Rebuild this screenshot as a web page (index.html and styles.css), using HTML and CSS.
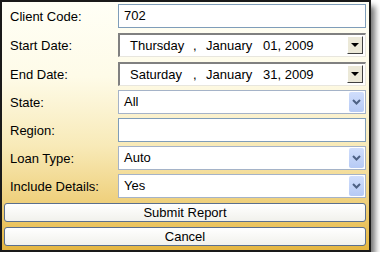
FILE: index.html
```html
<!DOCTYPE html>
<html lang="en">
<head>
  <meta charset="UTF-8">
  <title>Report Criteria</title>
  <link rel="stylesheet" href="styles.css">
</head>
<body>
  <div class="panel">
    <div class="row">
      <label class="label">Client Code:</label>
      <div class="field text">702</div>
    </div>
    <div class="row date-row">
      <label class="label">Start Date:</label>
      <div class="field date"><span class="d-day">Thursday</span><span class="d-sep">,</span><span class="d-month">January</span><span class="d-num">01, 2009</span><span class="date-btn"><span class="tri"></span></span></div>
    </div>
    <div class="row date-row">
      <label class="label">End Date:</label>
      <div class="field date"><span class="d-day">Saturday</span><span class="d-sep">,</span><span class="d-month">January</span><span class="d-num">31, 2009</span><span class="date-btn"><span class="tri"></span></span></div>
    </div>
    <div class="row">
      <label class="label">State:</label>
      <div class="field select">All<span class="sel-btn"><svg width="9" height="6" viewBox="0 0 9 6"><path d="M1 1 L4.5 4.5 L8 1" fill="none" stroke="#4d6185" stroke-width="2"/></svg></span></div>
    </div>
    <div class="row">
      <label class="label">Region:</label>
      <div class="field text"></div>
    </div>
    <div class="row">
      <label class="label">Loan Type:</label>
      <div class="field select">Auto<span class="sel-btn"><svg width="9" height="6" viewBox="0 0 9 6"><path d="M1 1 L4.5 4.5 L8 1" fill="none" stroke="#4d6185" stroke-width="2"/></svg></span></div>
    </div>
    <div class="row">
      <label class="label">Include Details:</label>
      <div class="field select">Yes<span class="sel-btn"><svg width="9" height="6" viewBox="0 0 9 6"><path d="M1 1 L4.5 4.5 L8 1" fill="none" stroke="#4d6185" stroke-width="2"/></svg></span></div>
    </div>
    <button class="button">Submit Report</button>
    <button class="button">Cancel</button>
  </div>
</body>
</html>
```

FILE: styles.css
```css
body {
  margin: 0;
  padding: 0;
  background-color: #fff;
  font-family: "Liberation Sans", Arial, sans-serif;
  font-size: 13px;
  color: #000;
}
.panel {
  box-sizing: border-box;
  width: 371px;
  height: 252px;
  border: 2px solid #1a1a1a;
  padding: 2px 3px 0 2px;
  background: linear-gradient(to bottom, #fffff6 0%, #fefbe8 30%, #f8eab8 58%, #efd17e 80%, #e5b640 100%);
  box-shadow: 4px 6px 6px rgba(0, 0, 0, 0.55);
  display: flex;
  flex-direction: column;
}
.row {
  display: flex;
  align-items: center;
  height: 24px;
  margin-bottom: 4px;
}
.date-row {
  margin-top: 1px;
}
.label {
  width: 108px;
  padding-left: 6px;
  flex-shrink: 0;
}
.field {
  box-sizing: border-box;
  position: relative;
  width: 248px;
  height: 24px;
  line-height: 22px;
  padding-left: 5px;
  background-color: #fff;
  white-space: nowrap;
}
.text {
  border: 1px solid #7f9db9;
}
.select {
  border: 1px solid #a5b3c8;
}
.sel-btn {
  position: absolute;
  right: 1px;
  top: 1px;
  width: 15px;
  height: 20px;
  border-radius: 2px;
  background: linear-gradient(to bottom, #d0defc, #b6caf5);
  display: flex;
  align-items: center;
  justify-content: center;
}
.date {
  border-top: 2px solid #808080;
  border-left: 2px solid #808080;
  border-bottom: 1px solid #e8e6de;
  border-right: 1px solid #e8e6de;
  line-height: 21px;
  padding-left: 10px;
}
.d-day {
  display: inline-block;
  width: 63px;
}
.d-sep {
  display: inline-block;
  width: 13px;
}
.d-month {
  display: inline-block;
  width: 57px;
}
.date-btn {
  position: absolute;
  right: 2px;
  top: 1px;
  box-sizing: border-box;
  width: 16px;
  height: 18px;
  background-color: #ece9d8;
  border-top: 1px solid #fff;
  border-left: 1px solid #fff;
  border-right: 1px solid #404040;
  border-bottom: 1px solid #404040;
  display: flex;
  align-items: center;
  justify-content: center;
}
.tri {
  width: 0;
  height: 0;
  border-left: 4px solid transparent;
  border-right: 4px solid transparent;
  border-top: 4px solid #000;
}
.button {
  box-sizing: border-box;
  width: 362px;
  height: 22px;
  margin-top: 1px;
  margin-bottom: 4px;
  border: 1px solid #5a6f8e;
  border-radius: 3px;
  background: linear-gradient(to bottom, #ffffff, #f1f1ec);
  font-family: "Liberation Sans", Arial, sans-serif;
  font-size: 13px;
  color: #000;
  padding: 0;
  cursor: pointer;
}
```
